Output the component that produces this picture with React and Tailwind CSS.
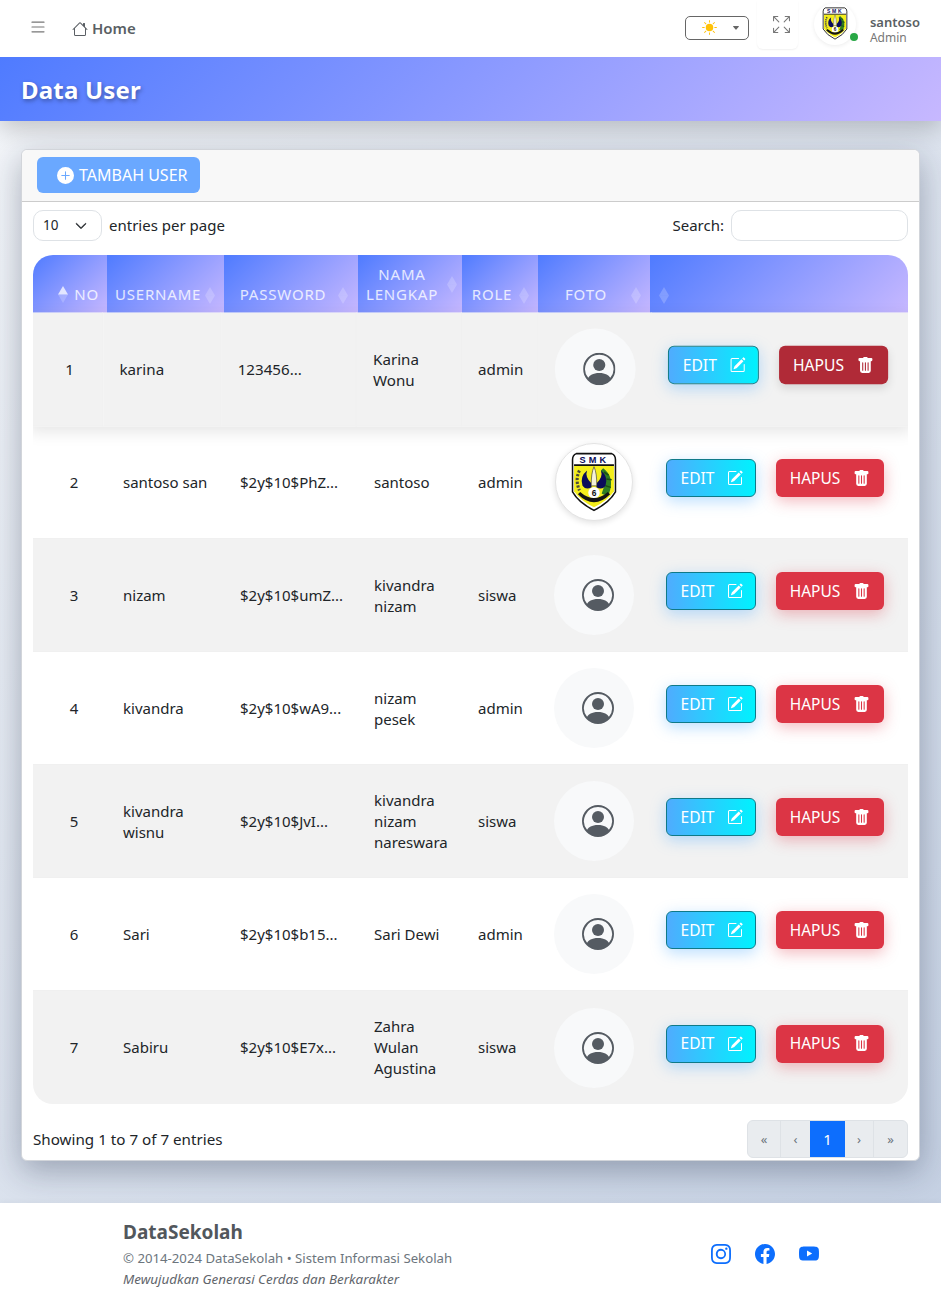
import React from "react";
import {
  BsList, BsHouse, BsArrowsFullscreen, BsSunFill, BsPlusCircleFill, BsChevronDown,
  BsPersonCircle, BsPencilSquare, BsTrashFill, BsInstagram, BsFacebook, BsYoutube, BsCaretDownFill,
} from "react-icons/bs";

const rows = [
  { no: 1, user: ["karina"], pass: "123456...", name: ["Karina", "Wonu"], role: "admin", hover: true },
  { no: 2, user: ["santoso san"], pass: "$2y$10$PhZ...", name: ["santoso"], role: "admin", logo: true },
  { no: 3, user: ["nizam"], pass: "$2y$10$umZ...", name: ["kivandra", "nizam"], role: "siswa" },
  { no: 4, user: ["kivandra"], pass: "$2y$10$wA9...", name: ["nizam", "pesek"], role: "admin" },
  { no: 5, user: ["kivandra", "wisnu"], pass: "$2y$10$JvI...", name: ["kivandra", "nizam", "nareswara"], role: "siswa" },
  { no: 6, user: ["Sari"], pass: "$2y$10$b15...", name: ["Sari Dewi"], role: "admin" },
  { no: 7, user: ["Sabiru"], pass: "$2y$10$E7x...", name: ["Zahra", "Wulan", "Agustina"], role: "siswa" },
];

function Logo({ className }) {
  return (
    <svg viewBox="0 0 60 78" className={className}>
      <path d="M7 2 H53 Q58 4 58 10 V52 Q50 66 30 76 Q10 66 2 52 V10 Q2 4 7 2Z" fill="#fff" stroke="#111" strokeWidth="2" />
      <path d="M4 17 H56 V51 Q48 63 30 72 Q12 63 4 51Z" fill="#f4ee1c" />
      <path d="M4 17 H56" stroke="#111" strokeWidth="2" />
      <text x="30.5" y="14" textAnchor="middle" fontSize="12" fontWeight="700" letterSpacing="4" fill="#0b0b5a" fontFamily="Liberation Sans">SMK</text>
      <path d="M42 21 Q57 32 50 53 Q45 58 40 54 Q48 38 39 24Z" fill="#2f7d22" />
      <path d="M43 26 L49 30 M46 35 L53 36 M45 44 L52 46" stroke="#1c4f15" strokeWidth="2" />
      <path d="M11 24 Q5 36 11 50" fill="none" stroke="#4a4a3a" strokeWidth="4" strokeDasharray="3 2" />
      <path d="M26 40 Q18 32 21 24 Q11 32 15 44 Q19 50 27 46Z" fill="#0b0b5a" />
      <path d="M34 40 Q42 32 39 24 Q49 32 45 44 Q41 50 33 46Z" fill="#0b0b5a" />
      <path d="M30 19 Q34 28 33.5 44 H26.5 Q26 28 30 19Z" fill="#f6f3d6" stroke="#333" strokeWidth="0.8" />
      <circle cx="30" cy="53" r="7.5" fill="#fff" />
      <text x="30" y="57" textAnchor="middle" fontSize="11" fontWeight="700" fill="#111" fontFamily="Liberation Sans">6</text>
      <path d="M9 55 Q30 76 51 55 L48 52 Q30 68 12 52Z" fill="#141414" />
    </svg>
  );
}

function Sort({ up, className }) {
  return (
    <svg viewBox="0 0 10 17" className={`absolute w-[10px] h-[17px] ${className}`}>
      <path d="M5 0 L10 8.5 H0Z" fill="#fff" opacity={up ? 0.75 : 0.2} />
      <path d="M5 17 L10 8.5 H0Z" fill="#fff" opacity={0.2} />
    </svg>
  );
}

function Lines({ lines }) {
  return (
    <div className={lines.length === 2 ? "pt-[2px]" : ""}>
      {lines.map((l) => <div key={l}>{l}</div>)}
    </div>
  );
}

const th = "relative h-[58px] align-bottom pb-[9px] pt-0 font-normal text-[15px] leading-[20px] tracking-[0.8px] text-white/80 uppercase text-center bg-[linear-gradient(135deg,#4f7bff,#c7b8ff)]";

function Row({ r, last }) {
  const td = `h-[113px] align-middle border-b ${
    r.no % 2 === 1 ? "bg-[#f2f2f2]" : "bg-white"
  } ${r.hover ? "border-[#f0f0f0] border-r" : "border-[#f0f0f0]"} ${last ? "border-b-0" : ""}`;
  return (
    <tr className={r.hover ? "scale-[1.01] shadow-[0_5px_15px_rgba(0,0,0,0.1)]" : ""}>
      <td className={`${td} pl-4 pr-2 text-center`}>{r.no}</td>
      <td className={`${td} pl-4`}><Lines lines={r.user} /></td>
      <td className={`${td} pl-4`}>{r.pass}</td>
      <td className={`${td} pl-4`}><Lines lines={r.name} /></td>
      <td className={`${td} pl-4`}>{r.role}</td>
      <td className={`${td} pl-4`}>
        {r.logo ? (
          <div className="w-[78px] h-[78px] ml-px rounded-full bg-white border border-[#e4e4e4] shadow-[0_2px_6px_rgba(0,0,0,0.12)] flex items-center justify-center">
            <Logo className="w-[46px] h-[60px]" />
          </div>
        ) : (
          <div className="w-20 h-20 pl-2 rounded-full bg-[#f8f9fa] flex items-center justify-center text-[#555b62]">
            <BsPersonCircle size={32} />
          </div>
        )}
      </td>
      <td className={`${td} pl-4`}>
        <div className="flex gap-5 mb-2">
          <div className="w-[90px] h-[38px] pl-[2px] rounded-md border border-[#0f7a88] bg-[linear-gradient(90deg,#4facfe,#00f2fe)] shadow-[0_4px_15px_rgba(79,172,254,0.4)] flex items-center justify-center gap-[13px] text-white text-[15.5px]">
            EDIT <BsPencilSquare size={16} />
          </div>
          <div className={`w-[108px] h-[38px] rounded-md ${r.hover ? "bg-[#b02a37] shadow-[0_4px_10px_rgba(0,0,0,0.12)]" : "bg-[#dc3545] shadow-[0_4px_15px_rgba(220,53,69,0.35)]"} flex items-center justify-center gap-[13px] text-white text-[15.5px]`}>
            HAPUS <BsTrashFill size={17} />
          </div>
        </div>
      </td>
    </tr>
  );
}

export default function App() {
  return (
    <div className="min-h-[1305px] flex flex-col bg-[linear-gradient(135deg,#f5f7fa,#c3cfe2)] font-['Noto_Sans','Open_Sans',sans-serif] text-[15px] leading-[21px] text-[#212529]">
      <nav className="h-[57px] bg-white flex items-center pl-[30px] pr-[21px] relative z-10">
        <BsList size={16} className="text-[#777] scale-[1.2] -mt-[4px]" />
        <div className="flex items-center ml-[26px] font-semibold text-[#5a5f64] text-[15px] gap-1">
          <BsHouse size={16} /> Home
        </div>
        <div className="ml-auto flex items-center">
          <div className="w-16 h-6 -mt-[2px] rounded-[5px] border border-[#666] flex items-center pl-4 pr-[8px] justify-between">
            <BsSunFill size={15} className="text-[#ffc107]" />
            <BsCaretDownFill size={8} className="text-[#666]" />
          </div>
          <div className="w-[41px] h-12 ml-2 -mt-[8px] pl-2 rounded-b-md shadow-[0_1px_2px_rgba(0,0,0,0.06)] flex items-center justify-center text-[#777]">
            <BsArrowsFullscreen size={17} className="-mt-[1px]" />
          </div>
          <div className="relative w-[42px] h-[42px] ml-[16px] -mt-[10px] rounded-full bg-white shadow-[0_1px_4px_rgba(0,0,0,0.08)] flex items-center justify-center">
            <Logo className="w-[26px] h-[33px]" />
            <span className="absolute right-[-2px] bottom-[4px] w-2 h-2 rounded-full bg-[#28a745]" />
          </div>
          <div className="ml-[14px] flex flex-col mt-[3px]">
            <span className="text-[13px] leading-[16px] font-semibold text-[#5a5f64]">santoso</span>
            <span className="text-[12px] leading-[16px] text-[#777]">Admin</span>
          </div>
        </div>
      </nav>

      <header className="h-16 flex items-center pl-[21px] bg-[linear-gradient(135deg,#4f7bff,#c7b8ff)] shadow-[0_8px_25px_rgba(0,0,0,0.2)]">
        <h1 className="pt-px text-2xl font-bold tracking-[0.2px] text-white [text-shadow:1px_2px_4px_rgba(0,0,0,0.35)]">Data User</h1>
      </header>

      <main className="mx-[21px] mt-7 rounded-md bg-white border border-[#d2d5da] shadow-[0_10px_32px_rgba(20,30,60,0.32)]">
        <div className="h-[52px] bg-[#f8f8f8] border-b border-[#cccccc] pl-[15px] pt-[7px] rounded-t-md">
          <div className="w-[163px] h-9 rounded-md bg-[#6aa8ff] flex items-center pl-5 gap-[5px] text-white text-[16px]">
            <BsPlusCircleFill size={17} /> TAMBAH USER
          </div>
        </div>

        <div className="px-[11px] pt-2 pb-[2px]">
          <div className="flex items-center justify-between h-[31px]">
            <div className="flex items-center">
              <div className="w-[69px] h-[31px] rounded-[10px] border border-[#dee2e6] flex items-center justify-between pl-[9px] pr-[14px] text-[13.5px]">
                10 <BsChevronDown size={12} stroke="currentColor" strokeWidth={1} />
              </div>
              <span className="ml-[7px]">entries per page</span>
            </div>
            <div className="flex items-center">
              <span>Search:</span>
              <div className="ml-[7px] w-[177px] h-[31px] rounded-[10px] border border-[#dee2e6] bg-white" />
            </div>
          </div>

          <div className="mt-[14px] rounded-[20px] overflow-hidden">
            <table className="w-[875px] table-fixed border-separate border-spacing-0">
              <colgroup>
                <col className="w-[74px]" />
                <col className="w-[117px]" />
                <col className="w-[134px]" />
                <col className="w-[104px]" />
                <col className="w-[76px]" />
                <col className="w-[112px]" />
                <col className="w-[258px]" />
              </colgroup>
              <thead>
                <tr>
                  <th className={`${th} text-right pr-[8px]`}>NO<Sort up className="left-[25px] bottom-[10px]" /></th>
                  <th className={`${th} pl-2 pr-6`}>USERNAME<Sort className="right-[9px] bottom-[9px]" /></th>
                  <th className={`${th} pl-2 pr-6`}>PASSWORD<Sort className="right-[10px] bottom-[9px]" /></th>
                  <th className={`${th} pl-2 pr-6`}>NAMA<br />LENGKAP<Sort className="right-[5px] bottom-[20px]" /></th>
                  <th className={`${th} pl-2 pr-6`}>ROLE<Sort className="right-[9px] bottom-[9px]" /></th>
                  <th className={`${th} pl-2 pr-6`}>FOTO<Sort className="right-[9px] bottom-[9px]" /></th>
                  <th className={th}><Sort className="left-[9px] bottom-[9px]" /></th>
                </tr>
              </thead>
              <tbody>
                {rows.map((r, i) => <Row key={r.no} r={r} last={i === rows.length - 1} />)}
              </tbody>
            </table>
          </div>

          <div className="flex items-center justify-between mt-4 h-[38px]">
            <span className="text-[15.2px]">Showing 1 to 7 of 7 entries</span>
            <div className="flex h-[38px] rounded-md overflow-hidden border border-[#dee2e6] bg-[#e9ecef] text-[#6c757d] text-[13px]">
              <div className="w-[33px] border-r border-[#dee2e6] flex items-center justify-center">«</div>
              <div className="w-[29px] flex items-center justify-center">‹</div>
              <div className="w-[35px] bg-[#0d6efd] text-white text-[15px] flex items-center justify-center">1</div>
              <div className="w-[29px] border-r border-[#dee2e6] flex items-center justify-center">›</div>
              <div className="w-[33px] flex items-center justify-center">»</div>
            </div>
          </div>
        </div>
      </main>

      <footer className="mt-[42px] h-[102px] bg-white shadow-[0_-1px_6px_rgba(0,0,0,0.04)] pl-[123px] pr-[122px] flex items-center justify-between">
        <div className="-mt-[1px]">
          <div className="text-[19px] leading-[28px] mb-[2px] font-bold text-[#52575c]">DataSekolah</div>
          <div className="text-[13.2px] leading-[21px] text-[#6c757d]">© 2014-2024 DataSekolah • Sistem Informasi Sekolah</div>
          <div className="text-[13.4px] leading-[21px] italic text-[#5f656b]">Mewujudkan Generasi Cerdas dan Berkarakter</div>
        </div>
        <div className="flex gap-[24px] text-[#0d6efd] -mt-[1px]">
          <BsInstagram size={20} />
          <BsFacebook size={20} />
          <BsYoutube size={20} />
        </div>
      </footer>
    </div>
  );
}
